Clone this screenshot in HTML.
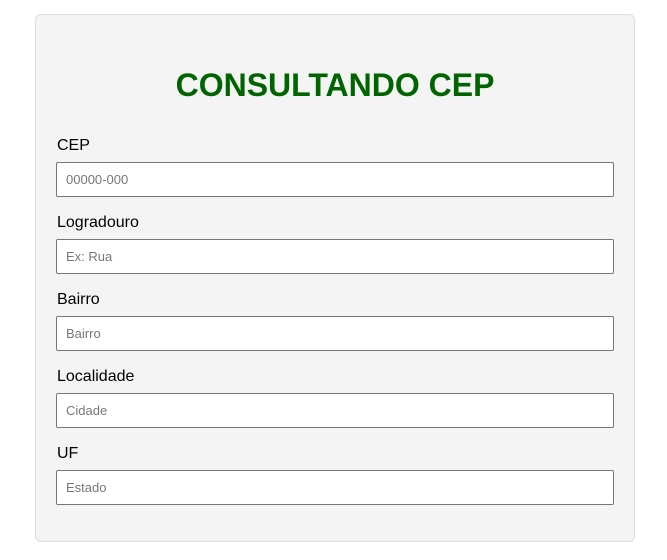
<html><head><style>
body{margin:0;background:#fff;font-family:"Liberation Sans",Arial,sans-serif;}
.box{position:absolute;left:35px;top:14px;width:598px;height:526px;background:#f4f4f4;border:1px solid #ddd;border-radius:6px;}
h1{position:absolute;left:0;width:100%;top:52px;margin:0;text-align:center;color:#006400;font-size:32px;font-weight:bold;line-height:36px;}
label{position:absolute;left:21px;font-size:16px;color:#000;line-height:18px;}
.in{position:absolute;left:20px;width:547px;height:33px;background:#fff;border:1px solid #777;border-radius:2px;font-size:13px;color:#777;line-height:33px;padding-left:9px;box-sizing:content-box;}
</style></head><body><div class="box">
<h1>CONSULTANDO CEP</h1>
<label style="top:122px">CEP</label><div class="in" style="top:147px">00000-000</div>
<label style="top:199px">Logradouro</label><div class="in" style="top:224px">Ex: Rua</div>
<label style="top:276px">Bairro</label><div class="in" style="top:301px">Bairro</div>
<label style="top:353px">Localidade</label><div class="in" style="top:378px">Cidade</div>
<label style="top:430px">UF</label><div class="in" style="top:455px">Estado</div>
</div></body></html>
